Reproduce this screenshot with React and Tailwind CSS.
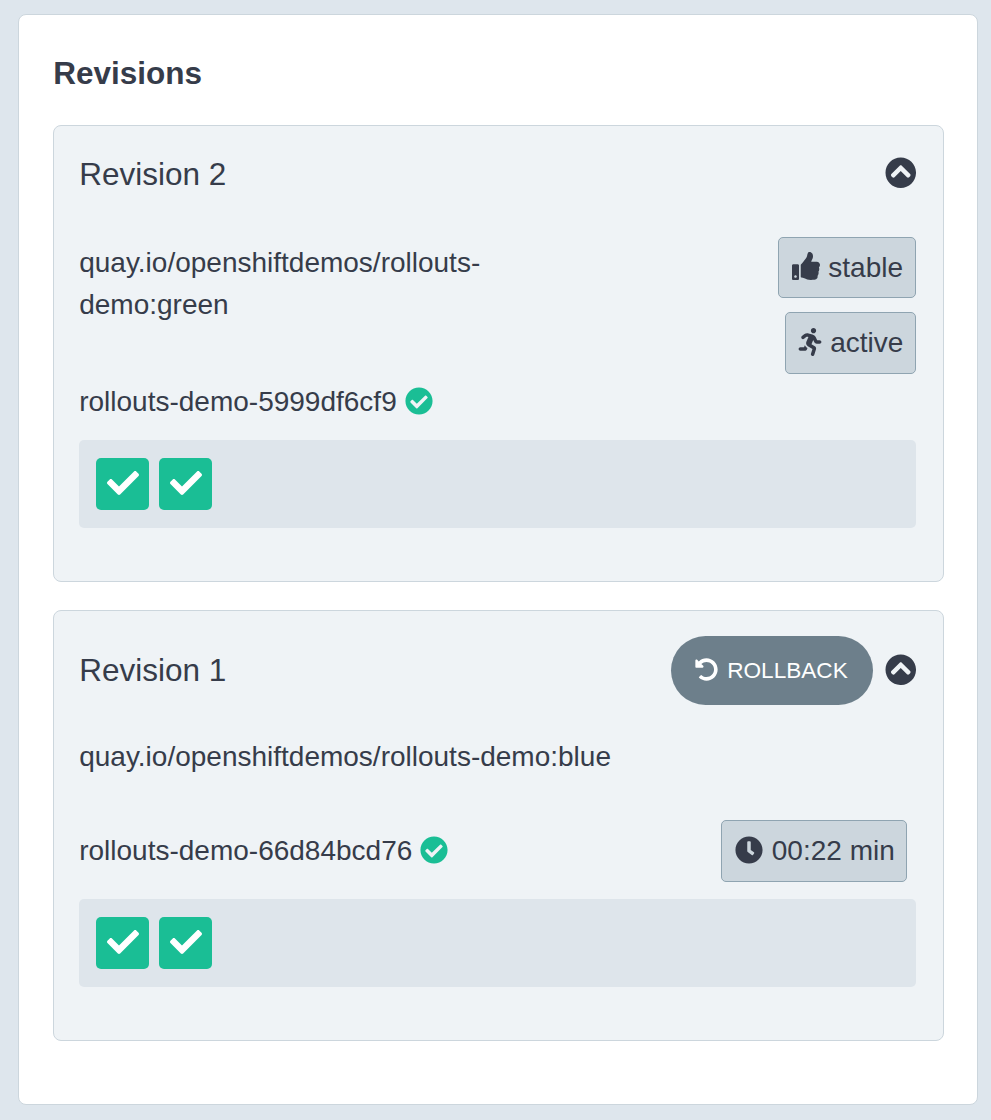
import { FaChevronCircleUp, FaThumbsUp, FaRunning, FaCheckCircle, FaCheck, FaUndoAlt, FaClock } from "react-icons/fa";

function Pods() {
  return (
    <div className="flex h-[88px] gap-[10px] rounded-[5px] bg-[#dee5eb] px-[17px] pt-[18px]">
      {[0, 1].map((i) => (
        <div key={i} className="flex h-[52px] w-[53px] items-center justify-center rounded-[5px] bg-[#1abe95] pb-[2px] text-white">
          <FaCheck className="size-8" />
        </div>
      ))}
    </div>
  );
}

function Tag({ icon, children, className }) {
  return (
    <div className={`flex shrink-0 items-center rounded-[5px] border border-[#8fa4b1] bg-[#ccd6dd] ${className}`}>
      {icon}
      <span>{children}</span>
    </div>
  );
}

export default function App() {
  return (
    <div className="h-[1120px] w-[991px] bg-[#dee6ed] pt-[14px] pl-[18px] font-['Liberation_Sans',sans-serif] text-[28px] leading-[42px] text-[#363c4a] antialiased">
      <main className="h-[1091px] w-[960px] rounded-[8px] border border-[#ccd6dd] bg-white px-[34px] pt-[40px]">
        <h1 className="h-[70px] pl-[0.2px] text-[31.5px] leading-[36px] font-bold">Revisions</h1>
        <section className="h-[457px] w-[891px] rounded-[8px] border border-[#ccd6dd] bg-[#eff3f6] pt-[26px] pr-[26.6px] pl-[25.2px]">
          <header className="flex h-[44px] items-center justify-between text-[31.5px]">
            <h2>Revision 2</h2>
            <FaChevronCircleUp className="mb-[2px] size-[31.5px]" />
          </header>
          <div className="mt-[41px] flex h-[137px] justify-between">
            <p className="mt-[5px] w-[440px]">quay.io/openshiftdemos/rollouts-demo:green</p>
            <div className="flex flex-col items-end gap-[14px]">
              <Tag className="h-[61px] w-[138px] gap-[8.6px] pl-[12.3px]" icon={<FaThumbsUp className="mb-[3px] size-[28px]" />}>stable</Tag>
              <Tag className="h-[62px] w-[131px] gap-[6px] pl-[9.8px]" icon={<FaRunning className="mb-[3px] size-[28px]" />}>active</Tag>
            </div>
          </div>
          <div className="mt-[7px] mb-[17px] flex h-[42px] items-center gap-[8px]">
            <span>rollouts-demo-5999df6cf9</span>
            <FaCheckCircle className="mb-[3px] size-[28px] text-[#1abe95]" />
          </div>
          <Pods />
        </section>
        <section className="mt-[28px] h-[431px] w-[891px] rounded-[8px] border border-[#ccd6dd] bg-[#eff3f6] pt-[25px] pr-[26.6px] pl-[25.2px]">
          <header className="flex h-[69px] items-center text-[31.5px]">
            <h2 className="mr-auto pb-px">Revision 1</h2>
            <button className="mr-[12px] flex h-[69px] w-[202px] items-center gap-[9.3px] rounded-full bg-[#6d7f8b] pl-[24px] text-[22.6px] text-white">
              <FaUndoAlt className="mb-[2px] size-[23px]" />
              <span className="pt-px">ROLLBACK</span>
            </button>
            <FaChevronCircleUp className="mb-[2px] size-[31.5px]" />
          </header>
          <p className="mt-[31px]">quay.io/openshiftdemos/rollouts-demo:blue</p>
          <div className="mt-[42px] mb-[17px] flex h-[62px] items-center justify-between pr-[9px]">
            <div className="flex items-center gap-[8px]">
              <span>rollouts-demo-66d84bcd76</span>
              <FaCheckCircle className="mb-[3px] size-[28px] text-[#1abe95]" />
            </div>
            <Tag className="h-[62px] w-[186px] gap-[9px] pl-[12.4px]" icon={<FaClock className="mb-[3px] size-[28px]" />}>00:22 min</Tag>
          </div>
          <Pods />
        </section>
      </main>
    </div>
  );
}
